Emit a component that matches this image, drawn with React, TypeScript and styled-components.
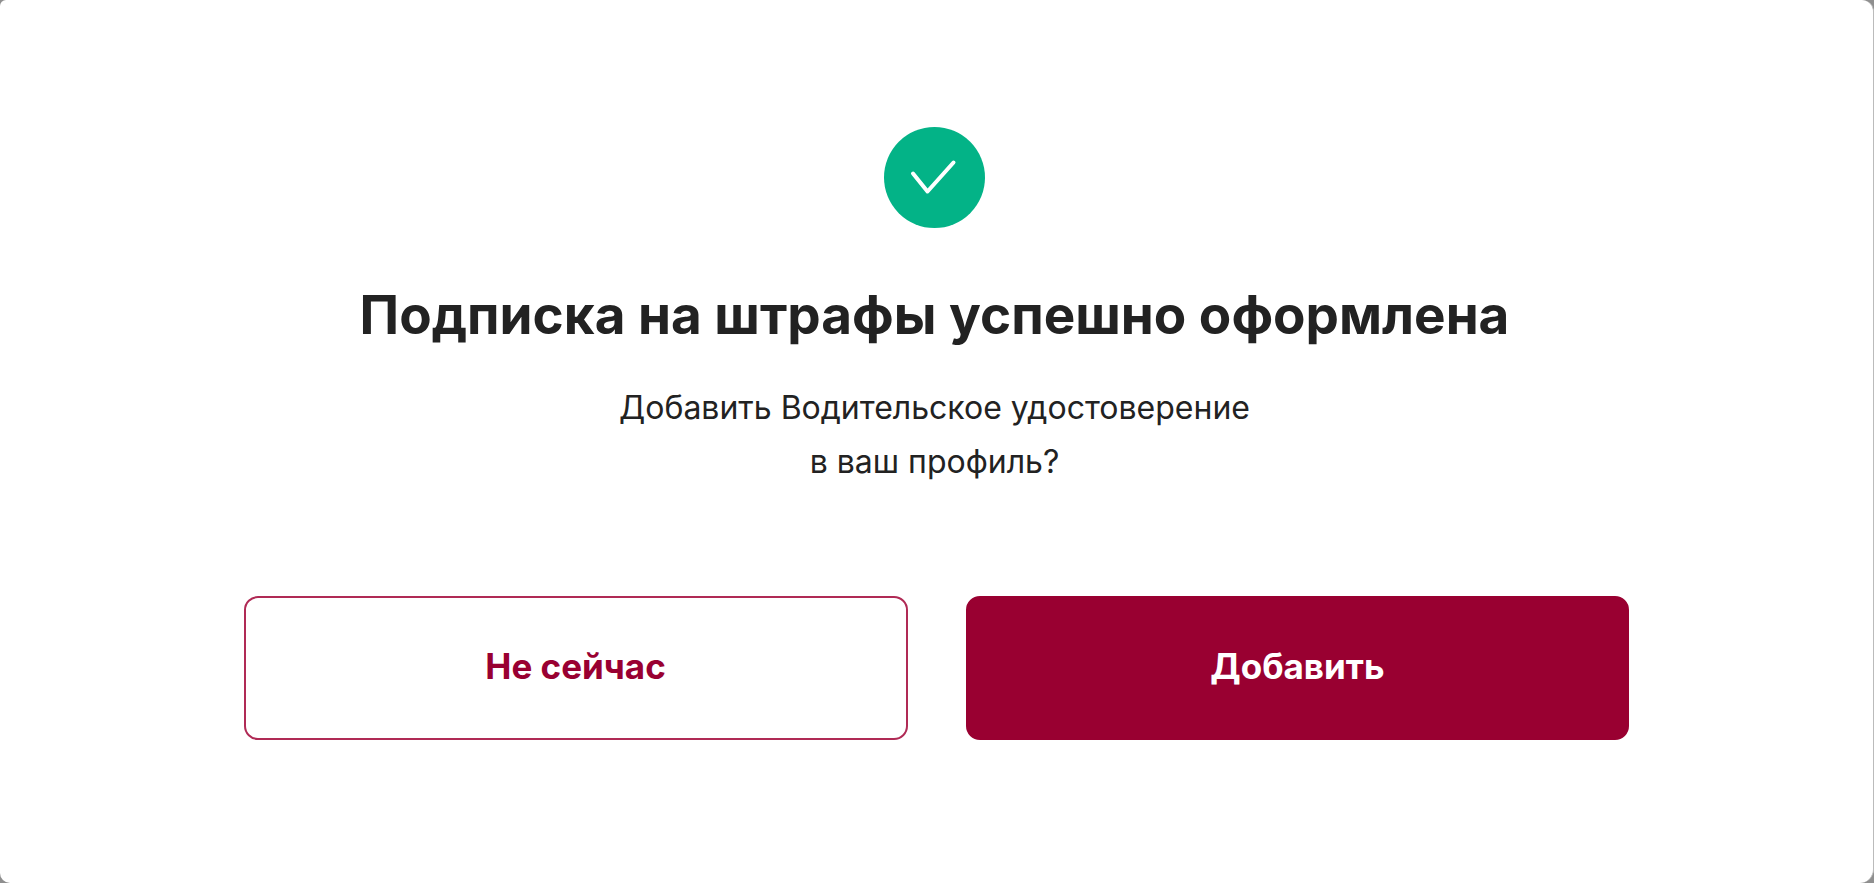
import React from 'react';
import styled, { createGlobalStyle } from 'styled-components';

const GlobalStyle = createGlobalStyle`
  *, *::before, *::after { box-sizing: border-box; }
  body {
    margin: 0;
    background: #8f8f8f;
    font-family: Inter, "Liberation Sans", sans-serif;
    color: #222;
  }
`;

const Dialog = styled.main`
  display: flex;
  flex-direction: column;
  min-height: 100vh;
  padding: 127px 13% 142px;
  background: #fff;
  border-right: 1px solid #bbb;
  border-radius: 6px 12px 14px 10px;
`;

const Summary = styled.section`
  display: flex;
  flex-direction: column;
  align-items: center;
  padding-right: 4px;
  text-align: center;
`;

const StatusIcon = styled.svg`
  display: block;
  width: 101px;
  height: 101px;
`;

const Title = styled.h1`
  margin: 55px 0 0;
  font-size: 53px;
  line-height: 64px;
  font-weight: 700;
`;

const Question = styled.p`
  margin: 34px 0 0;
  font-size: 32px;
  line-height: 54px;
  font-weight: 400;
`;

const Actions = styled.div`
  display: flex;
  gap: 58px;
  margin-top: 107px;
`;

const Button = styled.button<{ $primary?: boolean }>`
  flex: 1;
  height: 144px;
  padding: 0 24px 4px;
  border: 2px solid ${(p) => (p.$primary ? '#990031' : '#b02a55')};
  border-radius: 14px;
  background: ${(p) => (p.$primary ? '#990031' : '#fff')};
  color: ${(p) => (p.$primary ? '#fff' : '#990031')};
  font-family: inherit;
  font-size: 35px;
  line-height: 40px;
  font-weight: 700;
  cursor: pointer;
`;

export default function App() {
  return (
    <>
      <GlobalStyle />
      <Dialog>
        <Summary>
          <StatusIcon viewBox="0 0 101 101" aria-hidden="true">
            <circle cx="50.5" cy="50.5" r="50.5" fill="#03b387" />
            <path
              d="M29 46.5L43.5 64.5L69.5 35.5"
              fill="none"
              stroke="#fff"
              strokeWidth="4"
              strokeLinecap="round"
              strokeLinejoin="round"
            />
          </StatusIcon>
          <Title>Подписка на штрафы успешно оформлена</Title>
          <Question>
            Добавить Водительское удостоверение
            <br />в ваш профиль?
          </Question>
        </Summary>
        <Actions>
          <Button type="button">Не сейчас</Button>
          <Button type="button" $primary>
            Добавить
          </Button>
        </Actions>
      </Dialog>
    </>
  );
}
